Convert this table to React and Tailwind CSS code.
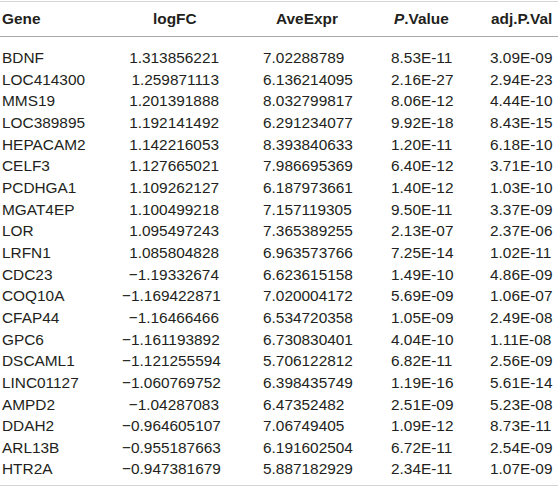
const rows = [
  ['BDNF', '1.313856221', '7.02288789', '8.53E-11', '3.09E-09'],
  ['LOC414300', '1.259871113', '6.136214095', '2.16E-27', '2.94E-23'],
  ['MMS19', '1.201391888', '8.032799817', '8.06E-12', '4.44E-10'],
  ['LOC389895', '1.192141492', '6.291234077', '9.92E-18', '8.43E-15'],
  ['HEPACAM2', '1.142216053', '8.393840633', '1.20E-11', '6.18E-10'],
  ['CELF3', '1.127665021', '7.986695369', '6.40E-12', '3.71E-10'],
  ['PCDHGA1', '1.109262127', '6.187973661', '1.40E-12', '1.03E-10'],
  ['MGAT4EP', '1.100499218', '7.157119305', '9.50E-11', '3.37E-09'],
  ['LOR', '1.095497243', '7.365389255', '2.13E-07', '2.37E-06'],
  ['LRFN1', '1.085804828', '6.963573766', '7.25E-14', '1.02E-11'],
  ['CDC23', '\u22121.19332674', '6.623615158', '1.49E-10', '4.86E-09'],
  ['COQ10A', '\u22121.169422871', '7.020004172', '5.69E-09', '1.06E-07'],
  ['CFAP44', '\u22121.16466466', '6.534720358', '1.05E-09', '2.49E-08'],
  ['GPC6', '\u22121.161193892', '6.730830401', '4.04E-10', '1.11E-08'],
  ['DSCAML1', '\u22121.121255594', '5.706122812', '6.82E-11', '2.56E-09'],
  ['LINC01127', '\u22121.060769752', '6.398435749', '1.19E-16', '5.61E-14'],
  ['AMPD2', '\u22121.04287083', '6.47352482', '2.51E-09', '5.23E-08'],
  ['DDAH2', '\u22120.964605107', '7.06749405', '1.09E-12', '8.73E-11'],
  ['ARL13B', '\u22120.955187663', '6.191602504', '6.72E-11', '2.54E-09'],
  ['HTR2A', '\u22120.947381679', '5.887182929', '2.34E-11', '1.07E-09'],
];

export default function App() {
  return (
    <div
      className="w-[558px] h-[489px] bg-white overflow-hidden text-[#231f20] text-[15.4px]"
      style={{ fontFamily: '"Liberation Sans", Arial, sans-serif' }}
    >
      <div className="mt-[1px] border-t border-[#d4d4d4]">
        {/* Header */}
        <div className="flex items-center h-[35px] pl-[2px] font-bold whitespace-nowrap border-b border-[#a9a9a9]">
          <div className="w-[151px]">Gene</div>
          <div className="w-[123px]">logFC</div>
          <div className="w-[118px]">AveExpr</div>
          <div className="w-[97px]"><span className="italic">P</span>.Value</div>
          <div className="flex-1">adj.P.Val</div>
        </div>

        {/* Body */}
        <div className="pt-[10px] pb-[5px] border-b border-[#d4d4d4]">
          {rows.map(r => (
            <div key={r[0]} className="flex h-[21.66px] leading-[21.66px] pl-[2px] whitespace-nowrap">
              <div className="w-[120px]">{r[0]}</div>
              <div className="w-[97px] text-right">{r[1]}</div>
              <div className="w-[44px]" />
              <div className="w-[128px]">{r[2]}</div>
              <div className="w-[99px]">{r[3]}</div>
              <div className="flex-1">{r[4]}</div>
            </div>
          ))}
        </div>
      </div>
    </div>
  );
}
